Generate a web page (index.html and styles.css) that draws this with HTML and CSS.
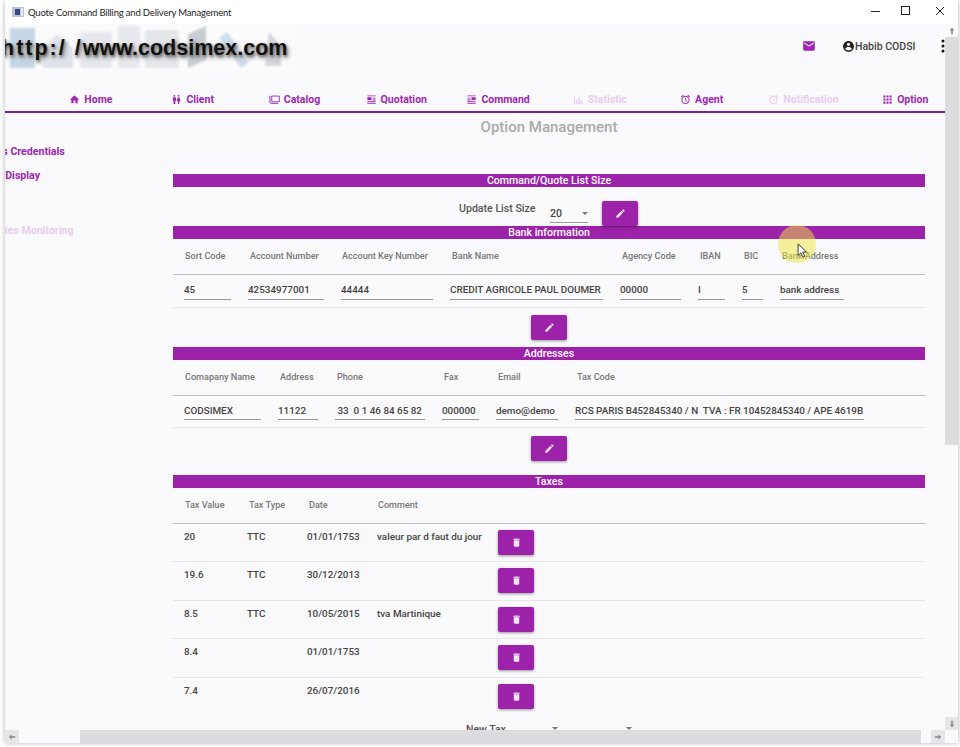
FILE: index.html
```html
<!DOCTYPE html>
<html lang="en">
<head>
<meta charset="utf-8">
<title>Quote Command Billing and Delivery Management</title>
<link rel="stylesheet" href="styles.css">
</head>
<body>
<div class="window">
  <div class="titlebar">
    <svg class="app-icon" viewBox="0 0 12 10"><rect x="0" y="0" width="12" height="10" fill="#b9c2d6"/><rect x="3" y="2" width="5" height="6" fill="#3b4a78"/><rect x="9" y="1" width="2" height="8" fill="#e8ecf4"/></svg>
    <span class="app-title">Quote Command Billing and Delivery Management</span>
    <div class="win-controls">
      <svg viewBox="0 0 10 10"><path d="M0 5.500h9" stroke="#222" fill="none"/></svg>
      <svg viewBox="0 0 10 10"><rect x=".5" y=".5" width="8" height="8" stroke="#222" fill="none"/></svg>
      <svg viewBox="0 0 10 10"><path d="M1 1l8 8M9 1l-8 8" stroke="#222" fill="none"/></svg>
    </div>
  </div>
  <div class="client">
    <div class="viewport">
      <header class="topbar">
        <div class="logo">
          <svg class="logo-art" viewBox="0 0 290 46">
            <g fill="#dfe3ea">
              <rect x="5" y="4" width="25" height="40" fill="#c6d6e6"/>
              <path d="M38 24l14-14 16 14v20H38z"/>
              <rect x="75" y="8" width="32" height="36" fill="#e6e8ee"/>
              <rect x="113" y="2" width="22" height="42" fill="#e8e9ee"/>
              <rect x="140" y="6" width="34" height="38" fill="#e4e6ea"/>
              <path d="M183 10l18-8v34l-18 8z" fill="#c9cdd2"/>
              <path d="M222 8l22 30-8 6-22-30z" fill="#cfdcec"/>
              <path d="M264 8l12 14v20h-16z" fill="#d4d6da"/>
            </g>
          </svg>
          <span class="logo-text"><span class="logo-scheme">http:/ /</span>www.codsimex.com</span>
        </div>
        <div class="user-actions">
          <svg class="mail" viewBox="0 0 24 24"><path d="M20 4H4c-1.100 0-2 .9-2 2v12c0 1.100.9 2 2 2h16c1.100 0 2-.9 2-2V6c0-1.100-.9-2-2-2zm0 4l-8 5-8-5V6l8 5 8-5v2z"/></svg>
          <div class="user">
            <svg class="user-icon" viewBox="0 0 24 24"><path d="M12 2C6.480 2 2 6.480 2 12s4.480 10 10 10 10-4.480 10-10S17.520 2 12 2zm0 3c1.660 0 3 1.340 3 3s-1.340 3-3 3-3-1.340-3-3 1.340-3 3-3zm0 14.200c-2.500 0-4.710-1.280-6-3.220.03-1.990 4-3.080 6-3.080 1.990 0 5.970 1.090 6 3.080-1.290 1.940-3.500 3.220-6 3.220z"/></svg>
            <span>Habib CODSI</span>
          </div>
          <svg class="kebab" viewBox="0 0 4 14"><circle cx="2" cy="2" r="1.500"/><circle cx="2" cy="7" r="1.500"/><circle cx="2" cy="12" r="1.500"/></svg>
        </div>
      </header>

      <nav class="nav">
        <a class="nav-item"><svg viewBox="0 0 24 24"><path d="M10 20v-6h4v6h5v-8h3L12 3 2 12h3v8z"/></svg>Home</a>
        <a class="nav-item"><svg viewBox="0 0 24 24"><path d="M5.500 22v-7.500H4V9c0-1.100.9-2 2-2h3c1.100 0 2 .9 2 2v5.500H9.500V22h-4zM18 22v-6h3l-2.540-7.630C18.180 7.550 17.420 7 16.560 7h-.12c-.86 0-1.630.55-1.900 1.370L12 16h3v6h3zM7.500 6c1.110 0 2-.89 2-2s-.89-2-2-2-2 .89-2 2 .89 2 2 2zm9 0c1.110 0 2-.89 2-2s-.89-2-2-2-2 .89-2 2 .89 2 2 2z"/></svg>Client</a>
        <a class="nav-item"><svg class="wide" viewBox="0 0 24 24"><path d="M6 4.500h16.500V17H6z M2 4v14c0 1.500 1 2.500 2.500 2.500H20" fill="none" stroke="currentColor" stroke-width="2"/></svg>Catalog</a>
        <a class="nav-item"><svg viewBox="0 0 24 24"><path d="M3 3h18v2H3zM3 7h9v6H3zM14 8h7v2h-7zM14 12h7v2h-7zM3 15h18v2H3zM3 19h18v2H3z"/></svg>Quotation</a>
        <a class="nav-item"><svg viewBox="0 0 24 24"><path d="M3 3h18v2H3zM12 7h9v6h-9zM3 8h7v2H3zM3 12h7v2H3zM3 15h18v2H3zM3 19h18v2H3z"/></svg>Command</a>
        <a class="nav-item off"><svg viewBox="0 0 24 24"><path d="M2 3h2v16H2zM7 12h3v7H7zM12 6h3v13h-3zM17 14h3v5h-3zM2 19h20v2H2z"/></svg>Statistic</a>
        <a class="nav-item"><svg viewBox="0 0 24 24"><path d="M22 5.720l-4.600-3.860-1.290 1.530 4.600 3.860L22 5.720zM7.880 3.390L6.600 1.860 2 5.710l1.290 1.530 4.590-3.850zM12.500 8H11v6l4.750 2.850.75-1.230-4-2.370V8zM12 4c-4.970 0-9 4.030-9 9s4.030 9 9 9 9-4.030 9-9-4.030-9-9-9zm0 16c-3.870 0-7-3.130-7-7s3.130-7 7-7 7 3.130 7 7-3.130 7-7 7z"/></svg>Agent</a>
        <a class="nav-item off"><svg viewBox="0 0 24 24"><path d="M22 5.720l-4.600-3.860-1.290 1.530 4.600 3.860L22 5.720zM7.880 3.390L6.600 1.860 2 5.710l1.290 1.530 4.590-3.850zM12.500 8H11v6l4.750 2.850.75-1.230-4-2.370V8zM12 4c-4.970 0-9 4.030-9 9s4.030 9 9 9 9-4.030 9-9-4.030-9-9-9zm0 16c-3.870 0-7-3.130-7-7s3.130-7 7-7 7 3.130 7 7-3.130 7-7 7z"/></svg>Notification</a>
        <a class="nav-item"><svg viewBox="0 0 24 24"><path d="M3 3h4.500v4.500H3zM9.750 3h4.500v4.500h-4.500zM16.500 3H21v4.500h-4.500zM3 9.750h4.500v4.500H3zM9.750 9.750h4.500v4.500h-4.500zM16.500 9.750H21v4.500h-4.500zM3 16.500h4.500V21H3zM9.750 16.500h4.500V21h-4.500zM16.500 16.500H21V21h-4.500z"/></svg>Option</a>
      </nav>

      <h1 class="page-title">Option Management</h1>

      <div class="content">
        <aside class="side">
          <a class="side-item cred">Access Credentials</a>
          <a class="side-item disp">List Display</a>
          <a class="side-item mon">Activities Monitoring</a>
        </aside>
        <main class="main">
          <h2 class="bar">Command/Quote List Size</h2>
          <div class="size-row">
            <span class="size-label">Update List Size</span>
            <div class="select"><span>20</span><i class="caret"></i></div>
            <button class="btn"><svg viewBox="0 0 24 24"><path d="M3 17.250V21h3.750L17.810 9.940l-3.750-3.750L3 17.250zM20.710 7.040c.39-.39.39-1.020 0-1.410l-2.340-2.340c-.39-.39-1.020-.39-1.410 0l-1.830 1.830 3.750 3.750 1.830-1.830z"/></svg></button>
          </div>

          <h2 class="bar">Bank information</h2>
          <div class="grid bank head">
            <span>Sort Code</span><span>Account Number</span><span>Account Key Number</span><span>Bank Name</span><span>Agency Code</span><span>IBAN</span><span>BIC</span><span>Bank Address</span>
          </div>
          <div class="grid bank fields">
            <div class="field">45</div><div class="field">42534977001</div><div class="field">44444</div><div class="field">CREDIT AGRICOLE PAUL DOUMER</div><div class="field">00000</div><div class="field">I</div><div class="field">5</div><div class="field">bank address</div>
          </div>
          <div class="actions bank-actions">
            <button class="btn"><svg viewBox="0 0 24 24"><path d="M3 17.250V21h3.750L17.810 9.940l-3.750-3.750L3 17.250zM20.710 7.040c.39-.39.39-1.020 0-1.410l-2.340-2.340c-.39-.39-1.020-.39-1.410 0l-1.830 1.830 3.750 3.750 1.830-1.830z"/></svg></button>
          </div>

          <h2 class="bar">Addresses</h2>
          <div class="grid addr head">
            <span>Comapany Name</span><span>Address</span><span>Phone</span><span>Fax</span><span>Email</span><span>Tax Code</span>
          </div>
          <div class="grid addr fields">
            <div class="field">CODSIMEX</div><div class="field">11122</div><div class="field">&nbsp;33&nbsp; 0 1 46 84 65 82</div><div class="field">000000</div><div class="field">demo@demo</div><div class="field">RCS PARIS B452845340 / N&nbsp; TVA : FR 10452845340 / APE 4619B</div>
          </div>
          <div class="actions addr-actions">
            <button class="btn"><svg viewBox="0 0 24 24"><path d="M3 17.250V21h3.750L17.810 9.940l-3.750-3.750L3 17.250zM20.710 7.040c.39-.39.39-1.020 0-1.410l-2.340-2.340c-.39-.39-1.020-.39-1.410 0l-1.830 1.830 3.750 3.750 1.830-1.830z"/></svg></button>
          </div>

          <h2 class="bar">Taxes</h2>
          <div class="grid tax head">
            <span>Tax Value</span><span>Tax Type</span><span>Date</span><span>Comment</span>
          </div>
          <div class="grid tax row"><span>20</span><span>TTC</span><span>01/01/1753</span><span>valeur par d faut du jour</span><button class="btn"><svg viewBox="0 0 24 24"><path d="M6 19c0 1.100.9 2 2 2h8c1.100 0 2-.9 2-2V7H6v12zM19 4h-3.500l-1-1h-5l-1 1H5v2h14V4z"/></svg></button></div>
          <div class="grid tax row"><span>19.6</span><span>TTC</span><span>30/12/2013</span><span></span><button class="btn"><svg viewBox="0 0 24 24"><path d="M6 19c0 1.100.9 2 2 2h8c1.100 0 2-.9 2-2V7H6v12zM19 4h-3.500l-1-1h-5l-1 1H5v2h14V4z"/></svg></button></div>
          <div class="grid tax row"><span>8.5</span><span>TTC</span><span>10/05/2015</span><span>tva Martinique</span><button class="btn"><svg viewBox="0 0 24 24"><path d="M6 19c0 1.100.9 2 2 2h8c1.100 0 2-.9 2-2V7H6v12zM19 4h-3.500l-1-1h-5l-1 1H5v2h14V4z"/></svg></button></div>
          <div class="grid tax row"><span>8.4</span><span></span><span>01/01/1753</span><span></span><button class="btn"><svg viewBox="0 0 24 24"><path d="M6 19c0 1.100.9 2 2 2h8c1.100 0 2-.9 2-2V7H6v12zM19 4h-3.500l-1-1h-5l-1 1H5v2h14V4z"/></svg></button></div>
          <div class="grid tax row last"><span>7.4</span><span></span><span>26/07/2016</span><span></span><button class="btn"><svg viewBox="0 0 24 24"><path d="M6 19c0 1.100.9 2 2 2h8c1.100 0 2-.9 2-2V7H6v12zM19 4h-3.500l-1-1h-5l-1 1H5v2h14V4z"/></svg></button></div>
          <div class="new-tax"><span class="new-label">New Tax</span><i class="caret"></i><i class="caret second"></i></div>
        </main>
      </div>
      <div class="pointer-glow"></div>
      <svg class="pointer" viewBox="0 0 12 18"><path d="M1 1v13l3.200-3 2.300 5 2-1-2.300-4.800H10.500z" fill="#fff" stroke="#222" stroke-width="1"/></svg>
    </div>
    <div class="vscroll">
      <div class="sb-btn"><svg viewBox="0 0 10 10"><path d="M5 1L2 4.500h2V9h2V4.500h2z"/></svg></div>
      <div class="vthumb"></div>
      <div class="sb-btn dark"><svg viewBox="0 0 10 10"><path d="M5 9L2 5.500h2V1h2v4.500h2z"/></svg></div>
    </div>
  </div>
  <div class="hscroll">
    <div class="sb-btn"><svg viewBox="0 0 10 10"><path d="M1 5l3.500-3v2H9v2H4.500v2z"/></svg></div>
    <div class="hthumb"></div>
    <div class="sb-btn"><svg viewBox="0 0 10 10"><path d="M9 5L5.500 2v2H1v2h4.500v2z"/></svg></div>
  </div>
</div>
</body>
</html>
```
FILE: styles.css
```css
* { box-sizing: border-box; }
html, body { margin: 0; height: 100%; overflow: hidden; }
body {
  background: #fff;
  font-family: Roboto, "Liberation Sans", sans-serif;
  color: #444;
}
.window {
  margin-left: 5px;
  width: 953px;
  height: 743px;
  display: flex;
  flex-direction: column;
  background: #faf9fb;
  box-shadow: 0 0 5px rgba(0,0,0,.3);
}
.titlebar {
  flex: none;
  height: 24px;
  background: #fff;
  display: flex;
  align-items: center;
  padding: 0 13px 0 7px;
}
.app-icon { width: 12px; height: 10px; margin-right: 4px; }
.app-title { font: 400 9.500px Lato, sans-serif; letter-spacing: -.18px; color: #222; }
.win-controls { margin-left: auto; margin-top: -2px; display: flex; gap: 20px; }
.win-controls svg { width: 10px; height: 10px; display: block; }
.win-controls svg:last-child { margin-left: 4px; }
.client { flex: 1; min-height: 0; display: flex; }
.viewport { position: relative; flex: 1; min-width: 0; overflow: hidden; }

.topbar { height: 64px; display: flex; justify-content: space-between; }
.logo { position: relative; width: 290px; height: 46px; background: #fbfbfc; overflow: hidden; }
.logo-art { position: absolute; inset: 0; width: 290px; height: 46px; filter: blur(1px); }
.logo-text {
  position: relative;
  display: block;
  margin: 12px 0 0 -4px;
  font: 700 21.500px "Liberation Sans", sans-serif;
  white-space: nowrap;
  color: #111;
  text-shadow: 1px 2px 3px #666, 2px 3px 5px #999;
}
.logo-scheme { letter-spacing: 2px; }
.user-actions { display: flex; align-items: center; height: 44px; }
.mail { width: 14px; height: 14px; fill: #9c27b0; margin-right: 26px; }
.user { display: flex; align-items: center; font-size: 10.500px; font-weight: 500; color: #444; width: 99px; }
.user-icon { width: 13px; height: 13px; fill: #222; }
.kebab { width: 4px; height: 14px; fill: #111; }

.nav {
  height: 25px;
  padding-left: 35px;
  display: grid;
  grid-template-columns: repeat(9, 101.800px);
  align-items: center;
  border-bottom: 2px solid #7b1fa2;
  overflow: hidden;
}
.nav-item {
  display: flex;
  justify-content: center;
  align-items: center;
  gap: 4px;
  font-size: 10.500px;
  font-weight: 700;
  color: #9c27b0;
  white-space: nowrap;
}
.nav-item svg { width: 11px; height: 11px; fill: currentColor; flex: none; }
.nav-item.off { color: #e9cdef; }

.page-title {
  margin: 0;
  height: 27px;
  line-height: 29px;
  text-align: center;
  font-size: 15px;
  font-weight: 500;
  color: #aaa;
  padding-left: 148px;
}

.content { display: flex; align-items: flex-start; }
.side { width: 168px; flex: none; overflow: hidden; display: flex; flex-direction: column; font-size: 10.600px; font-weight: 700; color: #9c27b0; }
.side-item { white-space: nowrap; display: block; line-height: 14px; }
.cred { margin-left: -32px; margin-top: 5px; }
.disp { margin-left: -20px; margin-top: 10px; }
.mon { margin-left: -31px; margin-top: 41px; color: #e9cdef; }

.main { width: 752px; flex: none; padding-top: 34px; }
.bar {
  margin: 0;
  height: 13px;
  line-height: 14px;
  background: #9c22a9;
  color: #fff;
  font-size: 10.600px;
  font-weight: 500;
  text-align: center;
  overflow: hidden;
}
.size-row { height: 39px; display: flex; align-items: flex-end; padding-left: 286px; }
.size-label { font-size: 10.600px; font-weight: 500; line-height: 14px; color: #555; width: 91px; margin-bottom: 10px; }
.select {
  position: relative;
  width: 38px;
  height: 20px;
  font-size: 10.500px;
  font-weight: 500;
  border-bottom: 1px solid #999;
  line-height: 22px;
  margin: 0 14px 3px 0;
}
.caret { display: inline-block; width: 0; height: 0; border: 3px solid transparent; border-top: 3px solid #777; }
.select .caret { position: absolute; right: 0; top: 9px; }
.btn {
  width: 36px;
  height: 25px;
  padding: 0;
  border: 0;
  border-radius: 2px;
  background: #9c22a9;
  box-shadow: 0 1px 3px rgba(0,0,0,.4);
  display: flex;
  align-items: center;
  justify-content: center;
}
.btn svg { width: 11px; height: 11px; fill: #f3e5f5; }

.grid { display: grid; padding-left: 11px; column-gap: 17px; }
.bank { grid-template-columns: 47px 76px 92px 153px 61px 27px 21px 64px; }
.addr { grid-template-columns: 77px 40px 90px 37px 62px 289px; }
.head {
  height: 36px;
  padding-bottom: 2px;
  align-items: center;
  font-size: 9.100px;
  font-weight: 500;
  color: #777;
  border-bottom: 1px solid #bbb;
  white-space: nowrap;
}
.head span { padding-left: 2px; }
.head span:first-child { padding-left: 1px; }
.bank.head span:nth-child(3), .tax.head span:nth-child(4) { padding-left: 1px; }
.fields { border-bottom: 1px solid #e6e5e8; align-items: end; padding-bottom: 7px; }
.bank.fields { height: 33px; }
.addr.fields { height: 32px; }
.field {
  height: 19px;
  padding-top: 2px;
  line-height: 16px;
  font-size: 9.900px;
  font-weight: 500;
  color: #444;
  border-bottom: 1px solid #999;
  white-space: nowrap;
  overflow: hidden;
}
.bank .field { padding-top: 1px; }
.actions { display: flex; justify-content: center; align-items: flex-start; }
.bank-actions { height: 39px; padding-top: 7px; }
.addr-actions { height: 47px; padding-top: 8px; }
.tax { grid-template-columns: 46px 43px 53px 104px 36px; }
.row { height: 38.400px; border-bottom: 1px solid #e6e5e8; font-size: 9.900px; font-weight: 500; color: #444; white-space: nowrap; padding-top: 6px; }
.row span { line-height: 13px; }
.row.last { border-bottom: 0; }
.new-tax { position: relative; padding-left: 293px; height: 20px; font-size: 10.500px; font-weight: 500; color: #555; line-height: 14px; padding-top: 7px; }
.new-tax .caret { position: absolute; left: 379px; top: 11px; }
.new-tax .second { left: 453px; }

.pointer-glow {
  position: absolute;
  left: 773px;
  top: 201px;
  width: 38px;
  height: 38px;
  border-radius: 50%;
  background: rgba(240,230,60,.5);
}
.pointer { position: absolute; left: 792px; top: 219px; width: 11px; height: 16px; }

.vscroll { width: 13px; flex: none; display: flex; flex-direction: column; }
.vthumb { height: 408px; background: #dcdbdd; }
.sb-btn { width: 13px; height: 13px; flex: none; display: flex; align-items: center; justify-content: center; }
.sb-btn svg { width: 8px; height: 8px; fill: #888; }
.vscroll .sb-btn:last-child { margin-top: auto; }
.dark, .hscroll .sb-btn { background: #e6e5e7; }
.hscroll { flex: none; height: 13px; width: 940px; display: flex; }
.hscroll .sb-btn { width: 14px; }
.hthumb { width: 842px; height: 13px; margin-left: 61px; margin-right: 10px; background: #dcdbdd; }
```
